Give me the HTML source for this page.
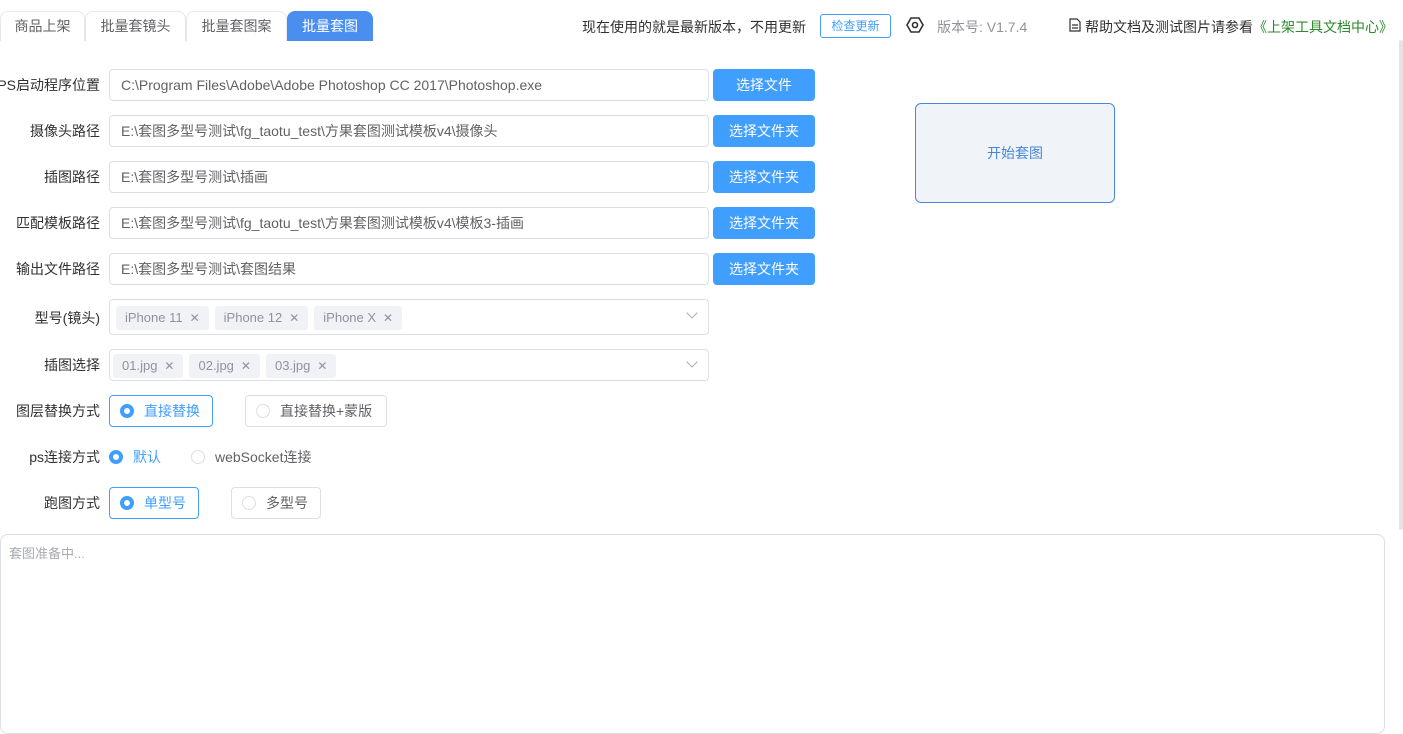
<!DOCTYPE html>
<html><head><meta charset="utf-8"><style>
*{box-sizing:border-box;margin:0;padding:0}
body{width:1403px;height:714px;overflow:hidden;background:#fff;font-family:"Liberation Sans","Noto Sans CJK SC",sans-serif;font-size:14px;color:#303133;position:relative}
.a{position:absolute;white-space:nowrap}
.tab{position:absolute;top:11px;height:30px;border:1px solid #e4e7ed;border-bottom:none;border-radius:8px 8px 0 0;color:#606266;font-size:14px;line-height:29px;text-align:center}
.lbl{position:absolute;left:-40px;width:140px;text-align:right;font-size:14px;color:#303133;white-space:nowrap}
.inp{position:absolute;left:109px;width:600px;height:32px;border:1px solid #dcdfe6;border-radius:4px;padding-left:11px;line-height:30px;color:#606266;font-size:14px;white-space:nowrap}
.btn{position:absolute;left:713px;width:102px;height:32px;background:#409eff;border-radius:4px;color:#fff;text-align:center;line-height:32px;font-size:14px}
.tag{display:inline-block;height:24px;background:#f0f2f5;color:#909399;border-radius:3px;padding:0 9px;line-height:24px;font-size:13px;margin-right:6px}
.tag i{font-style:normal;margin-left:7px;font-size:12px}
.rb{position:absolute;height:32px;border:1px solid #dcdfe6;border-radius:4px;line-height:30px;font-size:14px;color:#606266;padding-left:10px;white-space:nowrap}
.rb.on{border-color:#409eff;color:#409eff}
.dot{display:inline-block;width:14px;height:14px;border:1px solid #dcdfe6;border-radius:50%;vertical-align:-2px;margin-right:10px;background:#fff}
.on .dot,.dot.on{border:4px solid #409eff}
.chev{position:absolute;right:12px;top:9px;width:8px;height:8px;border-right:1px solid #a8abb2;border-bottom:1px solid #a8abb2;transform:rotate(45deg)}
</style></head><body>
<div class="tab" style="left:0;width:85px;border-left:1px solid #e4e7ed">商品上架</div>
<div class="tab" style="left:85px;width:101px">批量套镜头</div>
<div class="tab" style="left:186px;width:101px">批量套图案</div>
<div class="tab" style="left:287px;width:86px;background:#4a8fef;border-color:#4a8fef;color:#fff">批量套图</div>

<div class="a" style="left:582px;top:17px;font-size:14px">现在使用的就是最新版本，不用更新</div>
<div class="a" style="left:820px;top:14px;width:71px;height:24px;border:1px solid #409eff;border-radius:3px;color:#409eff;font-size:12px;text-align:center;line-height:22px">检查更新</div>
<svg class="a" style="left:906px;top:17px" width="18" height="16" viewBox="0 0 18 16"><polygon points="5,1 13,1 17,8 13,15 5,15 1,8" fill="none" stroke="#303133" stroke-width="1.6"/><circle cx="9" cy="8" r="2.5" fill="none" stroke="#303133" stroke-width="1.6"/></svg>
<div class="a" style="left:937px;top:17px;color:#909399;font-size:14px">版本号: V1.7.4</div>
<svg class="a" style="left:1069px;top:18px" width="12" height="14" viewBox="0 0 12 14"><path d="M1 1h7l3 3v9H1z M3 7h6 M3 10h6" fill="none" stroke="#303133" stroke-width="1.2"/></svg>
<div class="a" style="left:1085px;top:17px;font-size:14px">帮助文档及测试图片请参看<span style="color:#2a8a2a">《上架工具文档中心》</span></div>

<div class="a" style="left:1399px;top:40px;width:4px;height:490px;background:#e3e4e8;border-radius:2px"></div>

<div class="lbl" style="top:75px">PS启动程序位置</div>
<div class="inp" style="top:69px">C:\Program Files\Adobe\Adobe Photoshop CC 2017\Photoshop.exe</div>
<div class="btn" style="top:69px">选择文件</div>

<div class="lbl" style="top:121px">摄像头路径</div>
<div class="inp" style="top:115px">E:\套图多型号测试\fg_taotu_test\方果套图测试模板v4\摄像头</div>
<div class="btn" style="top:115px">选择文件夹</div>

<div class="lbl" style="top:167px">插图路径</div>
<div class="inp" style="top:161px">E:\套图多型号测试\插画</div>
<div class="btn" style="top:161px">选择文件夹</div>

<div class="lbl" style="top:213px">匹配模板路径</div>
<div class="inp" style="top:207px">E:\套图多型号测试\fg_taotu_test\方果套图测试模板v4\模板3-插画</div>
<div class="btn" style="top:207px">选择文件夹</div>

<div class="lbl" style="top:259px">输出文件路径</div>
<div class="inp" style="top:253px">E:\套图多型号测试\套图结果</div>
<div class="btn" style="top:253px">选择文件夹</div>

<div class="a" style="left:915px;top:103px;width:200px;height:100px;border:1px solid #4a86d8;border-radius:6px;background:#f0f3f8;color:#4a86d8;text-align:center;line-height:98px;font-size:14px">开始套图</div>

<div class="lbl" style="top:308px">型号(镜头)</div>
<div class="inp" style="top:299px;height:36px;padding-left:6px;line-height:34px"><span class="tag">iPhone 11<i>✕</i></span><span class="tag">iPhone 12<i>✕</i></span><span class="tag">iPhone X<i>✕</i></span><span class="chev"></span></div>

<div class="lbl" style="top:355px">插图选择</div>
<div class="inp" style="top:349px;padding-left:3px;line-height:30px"><span class="tag">01.jpg<i>✕</i></span><span class="tag">02.jpg<i>✕</i></span><span class="tag">03.jpg<i>✕</i></span><span class="chev" style="top:8px"></span></div>

<div class="lbl" style="top:401px">图层替换方式</div>
<div class="rb on" style="left:109px;top:395px;width:104px"><span class="dot"></span>直接替换</div>
<div class="rb" style="left:245px;top:395px;width:142px"><span class="dot"></span>直接替换+蒙版</div>

<div class="lbl" style="top:447px">ps连接方式</div>
<div class="a" style="left:109px;top:447px;color:#409eff"><span class="dot on"></span>默认</div>
<div class="a" style="left:191px;top:447px;color:#606266"><span class="dot"></span>webSocket连接</div>

<div class="lbl" style="top:493px">跑图方式</div>
<div class="rb on" style="left:109px;top:487px;width:90px"><span class="dot"></span>单型号</div>
<div class="rb" style="left:231px;top:487px;width:90px"><span class="dot"></span>多型号</div>

<div class="a" style="left:0;top:534px;width:1385px;height:200px;border:1px solid #dcdfe6;border-radius:8px;padding:8px 8px;color:#a8abb2;font-size:13px">套图准备中...</div>
</body></html>
